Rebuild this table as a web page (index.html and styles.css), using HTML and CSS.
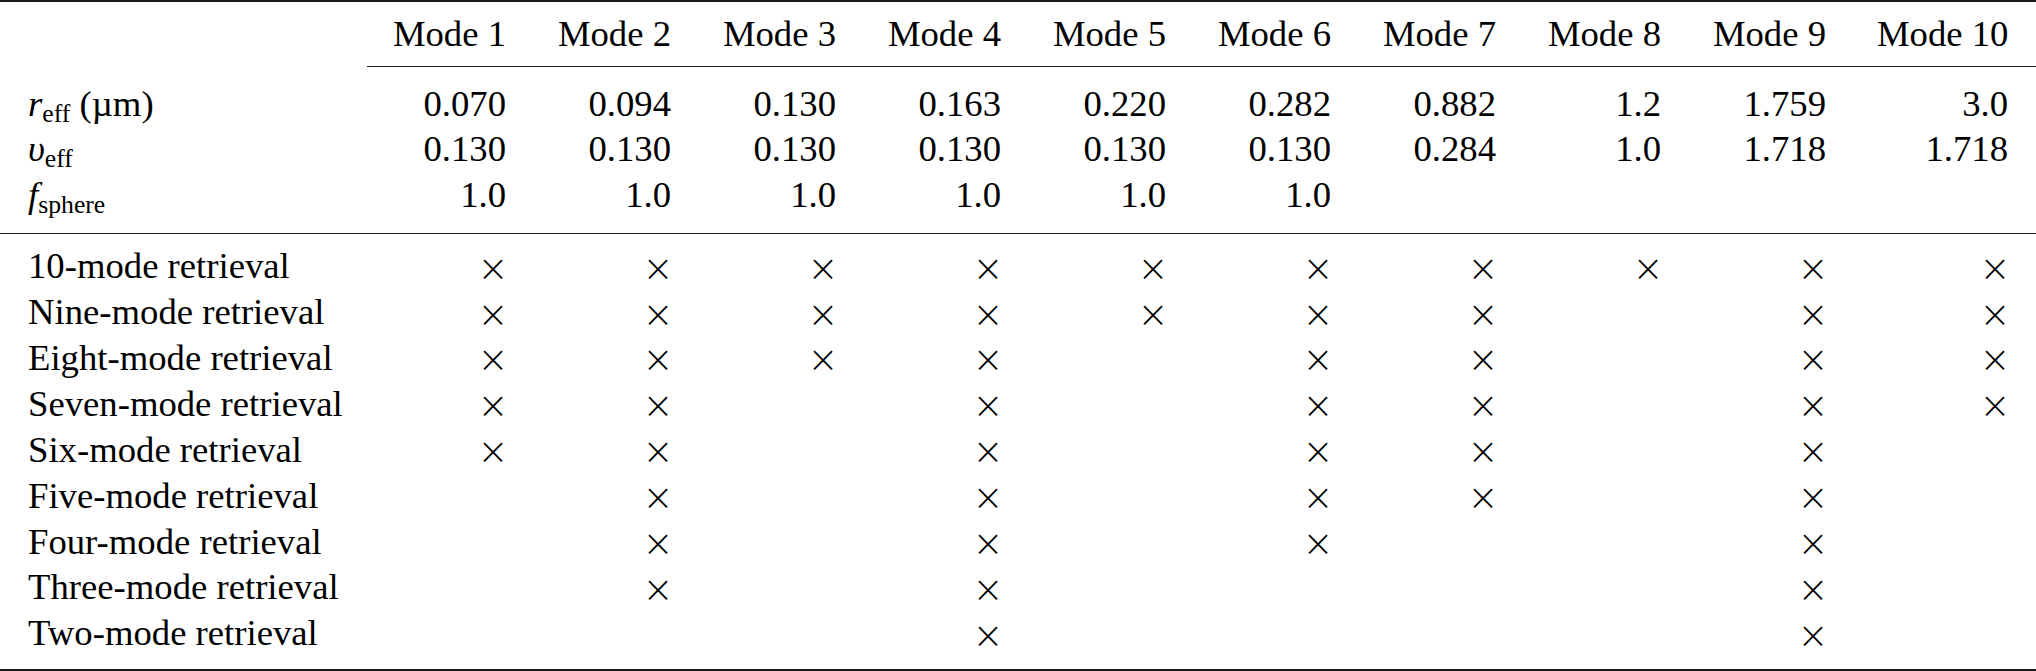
FILE: index.html
```html
<!DOCTYPE html>
<html lang="en">
<head>
<meta charset="utf-8">
<title>Mode table</title>
<link rel="stylesheet" href="styles.css">
</head>
<body>
<table class="modes">
  <colgroup>
    <col class="c-label">
    <col class="c-mode"><col class="c-mode"><col class="c-mode"><col class="c-mode"><col class="c-mode">
    <col class="c-mode"><col class="c-mode"><col class="c-mode"><col class="c-mode">
    <col class="c-last">
  </colgroup>
  <thead>
    <tr class="head">
      <th></th>
      <th>Mode 1</th><th>Mode 2</th><th>Mode 3</th><th>Mode 4</th><th>Mode 5</th>
      <th>Mode 6</th><th>Mode 7</th><th>Mode 8</th><th>Mode 9</th><th>Mode 10</th>
    </tr>
  </thead>
  <tbody class="params">
    <tr class="first">
      <td><i class="m">r</i><span class="sub">eff</span> (µm)</td>
      <td>0.070</td><td>0.094</td><td>0.130</td><td>0.163</td><td>0.220</td>
      <td>0.282</td><td>0.882</td><td>1.2</td><td>1.759</td><td>3.0</td>
    </tr>
    <tr>
      <td><i class="m">υ</i><span class="sub">eff</span></td>
      <td>0.130</td><td>0.130</td><td>0.130</td><td>0.130</td><td>0.130</td>
      <td>0.130</td><td>0.284</td><td>1.0</td><td>1.718</td><td>1.718</td>
    </tr>
    <tr class="last">
      <td><i class="m">f</i><span class="sub">sphere</span></td>
      <td>1.0</td><td>1.0</td><td>1.0</td><td>1.0</td><td>1.0</td>
      <td>1.0</td><td></td><td></td><td></td><td></td>
    </tr>
  </tbody>
  <tbody class="body">
    <tr class="first">
      <td>10-mode retrieval</td>
      <td><span class="x">×</span></td><td><span class="x">×</span></td><td><span class="x">×</span></td><td><span class="x">×</span></td><td><span class="x">×</span></td>
      <td><span class="x">×</span></td><td><span class="x">×</span></td><td><span class="x">×</span></td><td><span class="x">×</span></td><td><span class="x">×</span></td>
    </tr>
    <tr>
      <td>Nine-mode retrieval</td>
      <td><span class="x">×</span></td><td><span class="x">×</span></td><td><span class="x">×</span></td><td><span class="x">×</span></td><td><span class="x">×</span></td>
      <td><span class="x">×</span></td><td><span class="x">×</span></td><td></td><td><span class="x">×</span></td><td><span class="x">×</span></td>
    </tr>
    <tr>
      <td>Eight-mode retrieval</td>
      <td><span class="x">×</span></td><td><span class="x">×</span></td><td><span class="x">×</span></td><td><span class="x">×</span></td><td></td>
      <td><span class="x">×</span></td><td><span class="x">×</span></td><td></td><td><span class="x">×</span></td><td><span class="x">×</span></td>
    </tr>
    <tr>
      <td>Seven-mode retrieval</td>
      <td><span class="x">×</span></td><td><span class="x">×</span></td><td></td><td><span class="x">×</span></td><td></td>
      <td><span class="x">×</span></td><td><span class="x">×</span></td><td></td><td><span class="x">×</span></td><td><span class="x">×</span></td>
    </tr>
    <tr>
      <td>Six-mode retrieval</td>
      <td><span class="x">×</span></td><td><span class="x">×</span></td><td></td><td><span class="x">×</span></td><td></td>
      <td><span class="x">×</span></td><td><span class="x">×</span></td><td></td><td><span class="x">×</span></td><td></td>
    </tr>
    <tr>
      <td>Five-mode retrieval</td>
      <td></td><td><span class="x">×</span></td><td></td><td><span class="x">×</span></td><td></td>
      <td><span class="x">×</span></td><td><span class="x">×</span></td><td></td><td><span class="x">×</span></td><td></td>
    </tr>
    <tr>
      <td>Four-mode retrieval</td>
      <td></td><td><span class="x">×</span></td><td></td><td><span class="x">×</span></td><td></td>
      <td><span class="x">×</span></td><td></td><td></td><td><span class="x">×</span></td><td></td>
    </tr>
    <tr>
      <td>Three-mode retrieval</td>
      <td></td><td><span class="x">×</span></td><td></td><td><span class="x">×</span></td><td></td>
      <td></td><td></td><td></td><td><span class="x">×</span></td><td></td>
    </tr>
    <tr class="last">
      <td>Two-mode retrieval</td>
      <td></td><td></td><td></td><td><span class="x">×</span></td><td></td>
      <td></td><td></td><td></td><td><span class="x">×</span></td><td></td>
    </tr>
  </tbody>
</table>
</body>
</html>
```

FILE: styles.css
```css
html, body {
  margin: 0;
  padding: 0;
  background: #ffffff;
}

.modes {
  width: 2036px;
  table-layout: fixed;
  border-collapse: collapse;
  font-family: "Liberation Serif", "Times New Roman", serif;
  font-size: 36.7px;
  color: #000;
  border-top: 2px solid #1a1a1a;
  border-bottom: 2px solid #1a1a1a;
}

.c-label { width: 366.5px; }
.c-mode { width: 165px; }
.c-last { width: 184.5px; }

.modes th,
.modes td {
  padding: 0 25.5px;
  height: 45.9px;
  line-height: 45.9px;
  text-align: right;
  white-space: nowrap;
  font-weight: normal;
  vertical-align: baseline;
}

.modes th:first-child,
.modes td:first-child {
  text-align: left;
  padding-left: 28px;
  padding-right: 0;
}

.modes th:last-child,
.modes td:last-child {
  padding-right: 28px;
}

/* header row */
.head th {
  padding-top: 8.6px;
  padding-bottom: 9.5px;
}
.head th + th {
  border-bottom: 1.3px solid #1a1a1a;
}

/* parameter rows */
.params .first td { padding-top: 13.5px; }
.params .last td {
  padding-bottom: 15.2px;
  border-bottom: 1.3px solid #1a1a1a;
}

/* retrieval rows */
.body .first td { padding-top: 8.7px; }
.body .last td { padding-bottom: 12.5px; }

.m {
  font-style: italic;
}

.sub {
  font-size: 0.7em;
  line-height: 0;
  vertical-align: -0.22em;
}

.x {
  display: inline-block;
  width: 28.6px;
  font-family: "DejaVu Sans", sans-serif;
  font-weight: 200;
  font-size: 37px;
  line-height: 1;
  text-align: center;
  vertical-align: -0.07em;
}
```
